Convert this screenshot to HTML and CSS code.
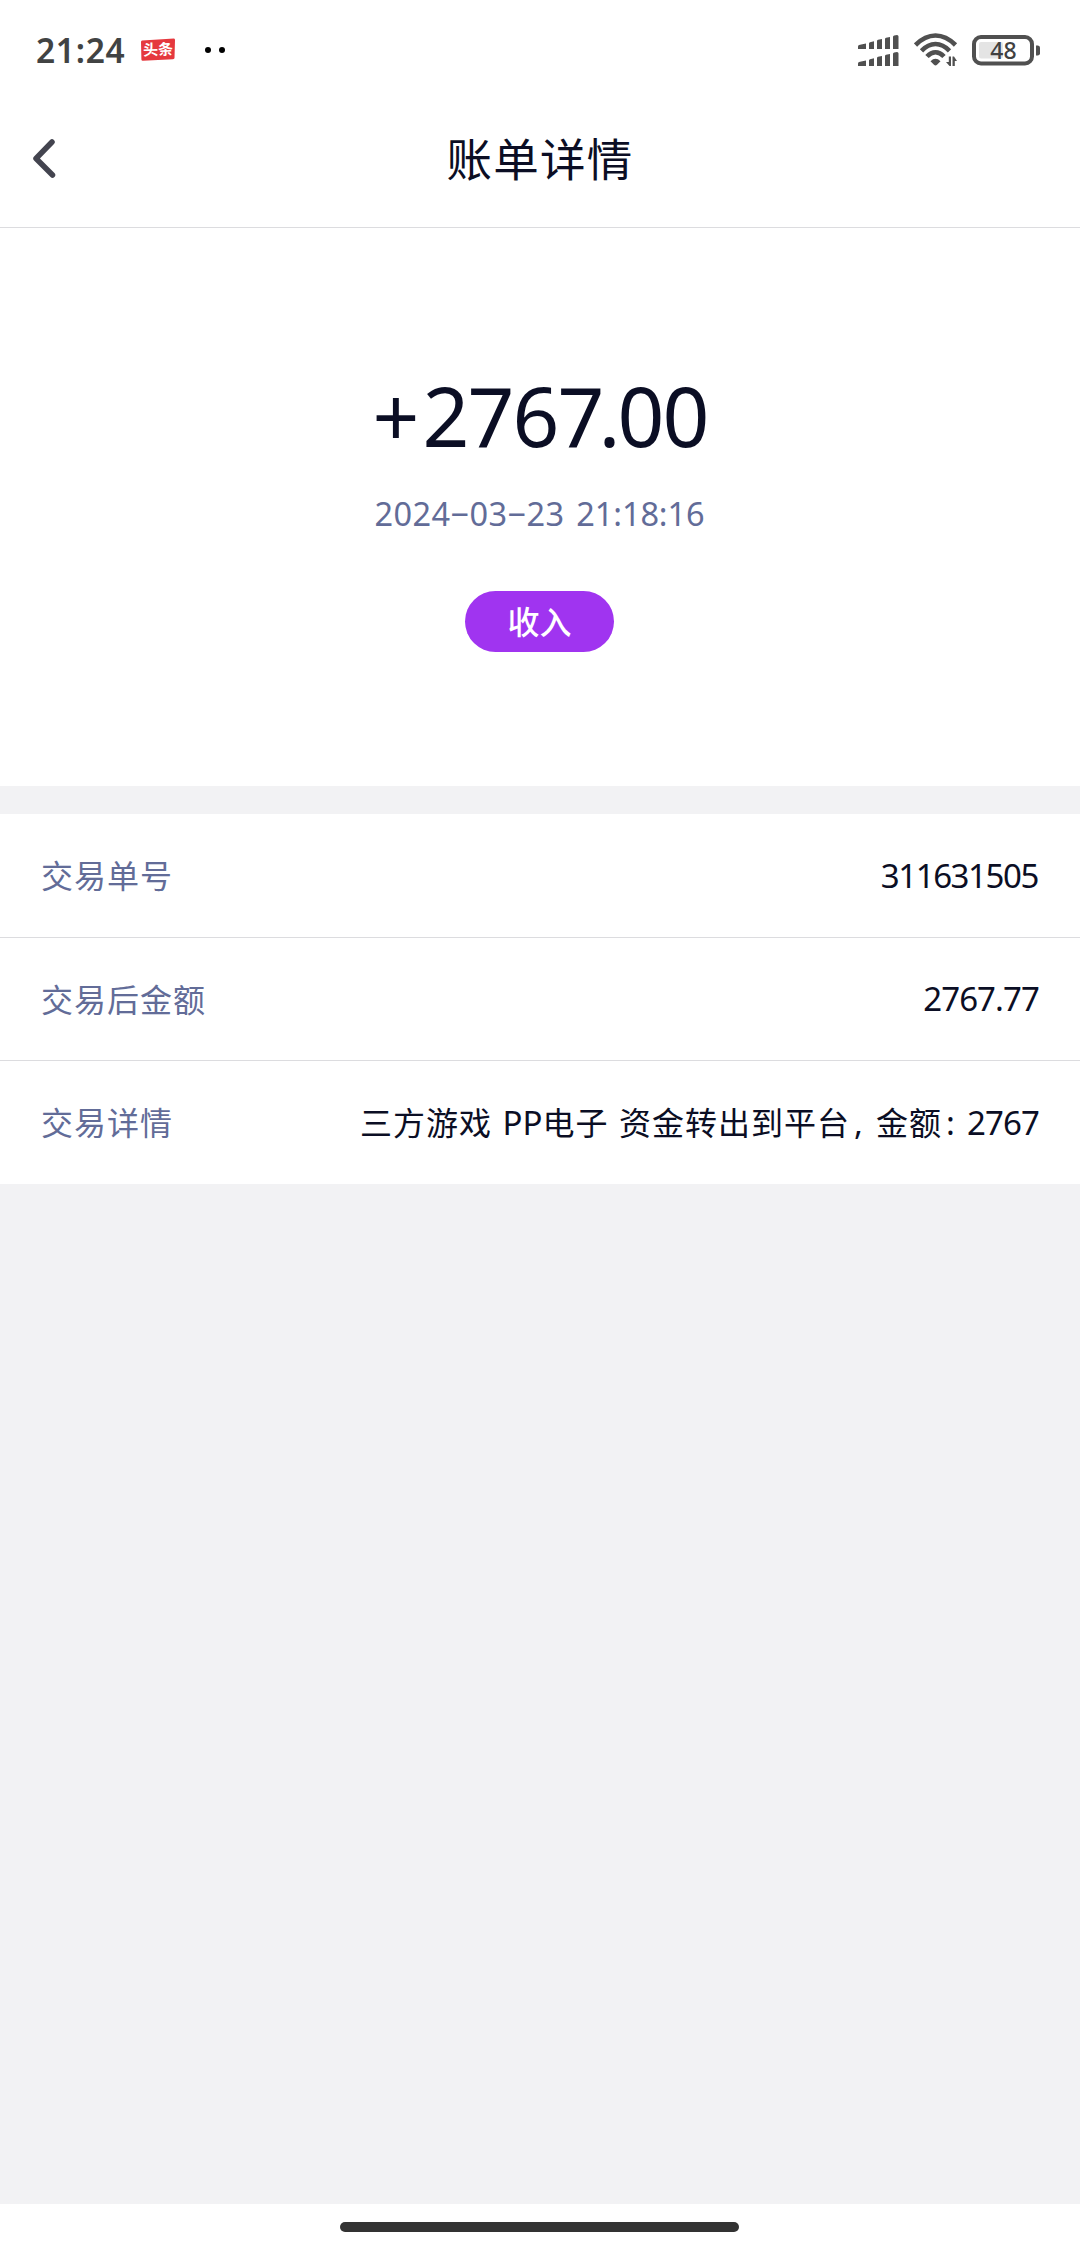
FILE: index.html
```html
<!DOCTYPE html>
<html lang="zh-CN">
<head>
<meta charset="utf-8">
<title>账单详情</title>
<link rel="stylesheet" href="styles.css">
</head>
<body>
<div class="status">
  <span class="clock">21:24</span>
  <svg class="badge" width="36" height="24" viewBox="0 0 36 24"><path d="M2 2.5 34 .5Q35 .5 35 2L34.500 20Q34.500 21 33 21.200L3 22.800Q1.500 23 1.400 21.500L1 4Q1 2.600 2 2.500Z" fill="#e5383e"/><text x="18" y="17" transform="rotate(-2 18 12)" text-anchor="middle" class="badge-text">头条</text></svg>
  <span class="dots"><i></i><i></i></span>
  <svg class="signal" width="42" height="34" viewBox="0 0 42 34" fill="#505050">
    <path id="bars" d="M0 11.500Q0 10 2 9.700L8 8.500V14H0ZM11 8.500Q11 7.400 12 7.200L16 6.300V14H11ZM19 6Q19 5 20 4.800L24 4V14H19ZM27 4Q27 3 28 2.700L32 2V14H27ZM35 2Q35 .8 36.200.5L39 0Q40.500 0 40.500 1.500V14H35Z"/>
    <use href="#bars" y="17"/>
  </svg>
  <svg class="wifi" width="44" height="36" viewBox="0 0 44 36"><g fill="none" stroke="#505050" stroke-width="4.600"><path d="M1.500 12Q11 2.500 21.500 2.500T41.500 12"/><path d="M7.500 17.800Q14 11 21.500 11T35.500 17.800"/><path d="M13 23.500Q17 19.200 21.500 19.200T30 23.500"/></g><path d="M16.500 28.200Q21.500 23.500 26.500 28.200L23 31.800Q21.500 33 20 31.800ZM32.500 29H34.800V23.500H37V33H35.500L32 29ZM38.500 23.500H40L43 28H40.800V33H38.500Z" fill="#505050"/></svg>
  <svg class="battery" width="70" height="32" viewBox="0 0 70 32"><rect x="2" y="2" width="58" height="26.500" rx="7" fill="none" stroke="#505050" stroke-width="4"/><rect x="7" y="7" width="24" height="16.500" rx="2" fill="#e4e4e4"/><path d="M64 10.500h2q2 .5 2 2v6q0 1.500-2 2h-2z" fill="#505050"/><text x="31.500" y="24" text-anchor="middle" class="battery-text">48</text></svg>
</div>
<header class="nav">
  <svg class="back" width="26" height="44" viewBox="0 0 26 44"><path d="M20 5 4 21.500 20.500 38" fill="none" stroke="#43444f" stroke-width="5.500" stroke-linecap="round" stroke-linejoin="round"/></svg>
  <h1 class="title">账单详情</h1>
</header>
<section class="summary">
  <div class="amount"><span class="sign">+</span>2767<span class="point">.</span>00</div>
  <div class="date">2024−03−23 <span class="time">21:18:16</span></div>
  <div class="tag">收入</div>
</section>
<section class="details">
  <div class="row"><span class="label">交易单号</span><span class="value serial">311631505</span></div>
  <div class="row"><span class="label">交易后金额</span><span class="value balance">2767.77</span></div>
  <div class="row"><span class="label">交易详情</span><span class="value note"><span class="han">三方游戏</span> PP<span class="han">电子</span> <span class="han">资金转出到平台</span><span class="comma">,</span><span class="han">金额</span><span class="colon">:</span><span class="balance">2767</span></span></div>
</section>
<footer class="home"><div class="handle"></div></footer>
</body>
</html>
```
FILE: styles.css
```css
* { box-sizing: border-box; }
body {
  margin: 0;
  width: 1080px;
  height: 2248px;
  display: flex;
  flex-direction: column;
  background: #f2f2f4;
  color: #0b0e24;
  font-family: "Noto Sans", "Noto Sans CJK SC", sans-serif;
  overflow: hidden;
}
.status {
  height: 100px;
  flex: none;
  display: flex;
  align-items: center;
  padding: 0 38px 0 36px;
  background: #fff;
}
.clock {
  width: 104px;
  font-size: 33.500px;
  font-weight: 600;
  line-height: 48px;
  letter-spacing: 0.700px;
  color: #414343;
}
.badge { margin-top: -1px; }
.badge-text {
  font: 700 15px "Noto Sans CJK SC", sans-serif;
  fill: #fff;
}
.dots { display: flex; gap: 8px; margin-left: 29px; }
.dots i { width: 6px; height: 6px; border-radius: 3px; background: #000; }
.signal { margin: 3px 14px 0 auto; }
.wifi { margin: 1px 14px 0 0; }
.battery { margin-top: 1px; }
.battery-text {
  font: 500 23px "Noto Sans", sans-serif;
  fill: #414141;
}
.nav {
  height: 128px;
  flex: none;
  display: flex;
  align-items: center;
  padding: 0 30px 12px 32px;
  background: #fff;
  border-bottom: 1px solid #dcdcdf;
}
.back { margin-top: 2px; }
.title {
  flex: 1;
  margin: -1px 28px 0 0;
  text-align: center;
  font: 400 45.500px/68px "Noto Sans CJK SC", sans-serif;
  letter-spacing: 1.200px;
}
.summary {
  height: 558px;
  flex: none;
  display: flex;
  flex-direction: column;
  align-items: center;
  padding-top: 131px;
  background: #fff;
}
.amount {
  font-size: 82px;
  line-height: 112px;
  letter-spacing: -1.900px;
}
.sign { margin-right: 5px; }
.point { margin: 0 -1px 0 -4px; }
.date {
  margin: 19px 1px 0 0;
  font-size: 32.500px;
  line-height: 48px;
  letter-spacing: 0.400px;
  color: #626c98;
  white-space: nowrap;
}
.time { margin-left: 3px; letter-spacing: -0.100px; }
.tag {
  width: 149px;
  height: 61px;
  margin: 53px 1px 0 0;
  border-radius: 31px;
  background: #a034f0;
  color: #fff;
  font: 500 32px/59px "Noto Sans CJK SC", sans-serif;
  text-align: center;
}
.details { margin-top: 28px; background: #fff; flex: none; }
.row {
  height: 123px;
  display: flex;
  align-items: center;
  justify-content: space-between;
  padding: 0 41px;
  font-size: 33px;
  line-height: 48px;
}
.row + .row { border-top: 1px solid #dcdcdf; }
.row:last-child { height: 124px; }
.label {
  margin-top: -3px;
  color: #626c98;
  font: 400 32px/48px "Noto Sans CJK SC", sans-serif;
  letter-spacing: 1px;
}
.value { white-space: nowrap; }
.serial { letter-spacing: -1.400px; margin-right: 1px; }
.balance { letter-spacing: -0.900px; }
.note { word-spacing: 2px; }
.han { font-size: 32px; letter-spacing: 1px; }
.comma { display: inline-block; width: 26px; padding-left: 4px; }
.colon { display: inline-block; width: 25px; padding-left: 4px; }
.home {
  height: 44px;
  flex: none;
  margin-top: auto;
  padding: 18px 0 0 340px;
  background: #fff;
}
.handle {
  width: 399px;
  height: 10px;
  border-radius: 5px;
  background: #333;
}
```
